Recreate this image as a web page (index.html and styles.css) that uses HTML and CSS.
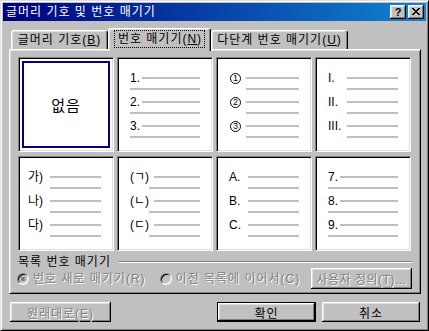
FILE: index.html
```html
<!DOCTYPE html>
<html lang="ko">
<head>
    <meta charset="UTF-8">
    <title>글머리 기호 및 번호 매기기</title>
    <link rel="stylesheet" href="styles.css">
</head>
<body>
    <div class="window">
        <div class="titlebar">
            <span class="title">글머리 기호 및 번호 매기기</span>
            <div class="tb-btns">
                <span class="tb-btn help">?</span>
                <span class="tb-btn">
                    <svg width="8" height="7" viewBox="0 0 8 7"><path d="M0 0h2v1H0zM6 0h2v1H6zM1 1h2v1H1zM5 1h2v1H5zM2 2h4v1H2zM3 3h2v1H3zM2 4h4v1H2zM1 5h2v1H1zM5 5h2v1H5zM0 6h2v1H0zM6 6h2v1H6z" fill="#000"/></svg>
                </span>
            </div>
        </div>

        <div class="tabs">
            <div class="tab t1">글머리 기호(<u>B</u>)</div>
            <div class="tab t2 active"><span class="focus">번호 매기기(<u>N</u>)</span></div>
            <div class="tab t3">다단계 번호 매기기(<u>U</u>)</div>
        </div>

        <div class="panel">
            <div class="grid">
                <div class="box sel"><div class="none">없음</div></div>

                <div class="box b-num">
                    <div class="item"><span class="lbl">1.</span><i class="ln"></i></div><i class="sub"></i>
                    <div class="item"><span class="lbl">2.</span><i class="ln"></i></div><i class="sub"></i>
                    <div class="item"><span class="lbl">3.</span><i class="ln"></i></div><i class="sub"></i>
                </div>

                <div class="box b-circ">
                    <div class="item"><span class="lbl"><span class="circ">1</span></span><i class="ln"></i></div><i class="sub"></i>
                    <div class="item"><span class="lbl"><span class="circ">2</span></span><i class="ln"></i></div><i class="sub"></i>
                    <div class="item"><span class="lbl"><span class="circ">3</span></span><i class="ln"></i></div><i class="sub"></i>
                </div>

                <div class="box b-roman">
                    <div class="item"><span class="lbl">I.</span><i class="ln"></i></div><i class="sub"></i>
                    <div class="item"><span class="lbl">II.</span><i class="ln"></i></div><i class="sub"></i>
                    <div class="item"><span class="lbl">III.</span><i class="ln"></i></div><i class="sub"></i>
                </div>

                <div class="box b-ga">
                    <div class="item"><span class="lbl">가)</span><i class="ln"></i></div><i class="sub"></i>
                    <div class="item"><span class="lbl">나)</span><i class="ln"></i></div><i class="sub"></i>
                    <div class="item"><span class="lbl">다)</span><i class="ln"></i></div><i class="sub"></i>
                </div>

                <div class="box b-jamo">
                    <div class="item"><span class="lbl">(ㄱ)</span><i class="ln"></i></div><i class="sub"></i>
                    <div class="item"><span class="lbl">(ㄴ)</span><i class="ln"></i></div><i class="sub"></i>
                    <div class="item"><span class="lbl">(ㄷ)</span><i class="ln"></i></div><i class="sub"></i>
                </div>

                <div class="box b-alpha">
                    <div class="item"><span class="lbl">A.</span><i class="ln"></i></div><i class="sub"></i>
                    <div class="item"><span class="lbl">B.</span><i class="ln"></i></div><i class="sub"></i>
                    <div class="item"><span class="lbl">C.</span><i class="ln"></i></div><i class="sub"></i>
                </div>

                <div class="box b-num">
                    <div class="item"><span class="lbl">7.</span><i class="ln"></i></div><i class="sub"></i>
                    <div class="item"><span class="lbl">8.</span><i class="ln"></i></div><i class="sub"></i>
                    <div class="item"><span class="lbl">9.</span><i class="ln"></i></div><i class="sub"></i>
                </div>
            </div>

            <div class="group-head">
                <span>목록 번호 매기기</span>
                <i class="etch"></i>
            </div>
            <div class="options">
                <span class="radio off"><i class="rb on"></i>번호 새로 매기기(R)</span>
                <span class="radio off"><i class="rb"></i>이전 목록에 이어서(C)</span>
                <button class="btn custom" disabled>사용자 정의(T)...</button>
            </div>
        </div>

        <div class="footer">
            <button class="btn reset" disabled>원래대로(E)</button>
            <button class="btn default">확인</button>
            <button class="btn cancel">취소</button>
        </div>
    </div>
</body>
</html>
```

FILE: styles.css
```css
body {
    margin: 0;
    font-family: "Liberation Sans", "Noto Sans CJK KR", sans-serif;
    font-size: 12px;
    letter-spacing: 1px;
    background-color: #c0c0c0;
    color: #000;
}
.window {
    width: 429px;
    height: 331px;
    box-sizing: border-box;
    border: 1px solid;
    border-color: #dfdfdf #000 #000 #dfdfdf;
    box-shadow: inset 1px 1px #fff, inset -1px -1px #808080;
    padding: 2px;
    background-color: #c0c0c0;
    display: flex;
    flex-direction: column;
}
.titlebar {
    height: 18px;
    flex: none;
    background: linear-gradient(to right, #000080, #1084d0);
    display: flex;
    align-items: center;
    padding: 0 2px 0 3px;
    color: #fff;
}
.title {
    flex: 1;
    line-height: 18px;
}
.tb-btns {
    display: flex;
    gap: 2px;
}
.tb-btn {
    width: 16px;
    height: 14px;
    box-sizing: border-box;
    background-color: #c0c0c0;
    box-shadow: inset -1px -1px #000, inset 1px 1px #fff, inset -2px -2px #808080, inset 2px 2px #dfdfdf;
    display: flex;
    align-items: center;
    justify-content: center;
    color: #000;
    letter-spacing: 0;
}
.tb-btn svg {
    display: block;
    margin-top: -1px;
}
.help {
    font-family: "Liberation Sans", sans-serif;
    font-weight: bold;
    font-size: 11px;
    line-height: 12px;
}

/* tabs */
.tabs {
    display: flex;
    align-items: flex-end;
    height: 21px;
    flex: none;
    margin-top: 7px;
    padding-left: 8px;
    position: relative;
    z-index: 1;
}
.tab {
    height: 19px;
    box-sizing: border-box;
    border: 1px solid #fff;
    border-right-color: #000;
    border-bottom: none;
    border-radius: 3px 3px 0 0;
    box-shadow: inset -1px 0 #808080, inset 1px 1px #dfdfdf;
    display: flex;
    align-items: center;
    justify-content: center;
    line-height: 14px;
    white-space: nowrap;
}
.t1 {
    width: 97px;
}
.t2 {
    width: 103px;
}
.t3 {
    width: 137px;
}
.tab.active {
    height: 23px;
    margin-bottom: -2px;
    padding-bottom: 3px;
    background-color: #c0c0c0;
    box-shadow: inset -1px 0 #808080, inset 1px 1px #dfdfdf, inset 0 -2px #c0c0c0;
}
.focus {
    outline: 1px dotted #000;
    padding: 1px 2px 1px 3px;
}

/* panel */
.panel {
    margin: 0 5px 0 6px;
    height: 245px;
    flex: none;
    box-sizing: border-box;
    border: 1px solid;
    border-color: #fff #000 #000 #fff;
    box-shadow: inset 1px 1px #dfdfdf, inset -1px -1px #808080;
    padding: 7px 8px 2px;
    display: flex;
    flex-direction: column;
}
.grid {
    display: grid;
    grid-template-columns: repeat(4, 96px);
    grid-template-rows: 95px 95px;
    column-gap: 3px;
    row-gap: 4px;
}
.box {
    background-color: #fff;
    box-sizing: border-box;
    border: 1px solid;
    border-color: #808080 #fff #fff #808080;
    box-shadow: inset 1px 1px #000, inset -1px -1px #dfdfdf;
    padding: 13px 12px 0 12px;
    --ind: 12px;
    --sub: 0px;
}
.box.sel {
    padding: 3px;
}
.none {
    height: 100%;
    box-sizing: border-box;
    border: 2px solid #000080;
    display: flex;
    align-items: center;
    justify-content: center;
    font-size: 15px;
}
.item {
    display: flex;
    align-items: center;
    height: 14px;
}
.lbl {
    width: var(--ind);
    flex: none;
    white-space: nowrap;
    line-height: 14px;
    letter-spacing: 0;
}
.ln {
    flex: 1;
    height: 2px;
    background-color: #c0c0c0;
}
.sub {
    display: block;
    height: 2px;
    background-color: #c0c0c0;
    margin: 3px 0 5px var(--sub);
}
.b-circ {
    --ind: 16px;
    --sub: 16px;
    padding-left: 13px;
}
.b-circ .lbl {
    display: flex;
    align-items: center;
}
.circ {
    width: 11px;
    height: 11px;
    box-sizing: border-box;
    border: 1px solid #000;
    border-radius: 50%;
    display: flex;
    align-items: center;
    justify-content: center;
    font-size: 9px;
    line-height: 9px;
}
.b-roman,
.b-alpha {
    --ind: 19px;
    --sub: 19px;
}
.b-ga {
    --ind: 22px;
    --sub: 22px;
    padding-left: 9px;
}
.b-jamo {
    --ind: 24px;
    --sub: 19px;
}

/* list numbering group */
.group-head {
    display: flex;
    align-items: center;
    height: 14px;
    margin-top: 4px;
    line-height: 14px;
}
.etch {
    flex: 1;
    height: 0;
    border-top: 1px solid #808080;
    border-bottom: 1px solid #fff;
    margin-left: 8px;
}
.options {
    display: flex;
    align-items: center;
    height: 21px;
    margin-top: -1px;
}
.radio {
    display: flex;
    align-items: center;
    line-height: 14px;
    white-space: nowrap;
}
.radio:first-child {
    margin-left: -1px;
}
.radio + .radio {
    margin-left: 14px;
}
.off {
    color: #808080;
    text-shadow: 1px 1px #fff;
}
.rb {
    width: 12px;
    height: 12px;
    flex: none;
    box-sizing: border-box;
    border-radius: 50%;
    background-color: #c0c0c0;
    border: 1px solid;
    border-color: #808080 #fff #fff #808080;
    box-shadow: inset 1px 1px #000, inset -1px -1px #dfdfdf;
    margin-right: 4px;
}
.rb.on {
    background: radial-gradient(circle, #808080 0 2px, #c0c0c0 2.5px);
}

/* buttons */
.btn {
    font: inherit;
    letter-spacing: inherit;
    height: 21px;
    box-sizing: border-box;
    background-color: #c0c0c0;
    border: none;
    box-shadow: inset -1px -1px #000, inset 1px 1px #fff, inset -2px -2px #808080, inset 2px 2px #dfdfdf;
    padding: 0;
    color: #000;
    white-space: nowrap;
}
.btn:disabled {
    color: #808080;
    text-shadow: 1px 1px #fff;
}
.custom {
    width: 101px;
    margin-left: auto;
    letter-spacing: 0.5px;
}
.footer {
    display: flex;
    margin-top: 8px;
    padding: 0 6px 0 7px;
}
.footer .btn {
    height: 20px;
}
.reset {
    width: 101px;
}
.default {
    width: 99px;
    margin-left: auto;
    border: 1px solid #000;
}
.cancel {
    width: 98px;
    margin-left: 6px;
}
```
